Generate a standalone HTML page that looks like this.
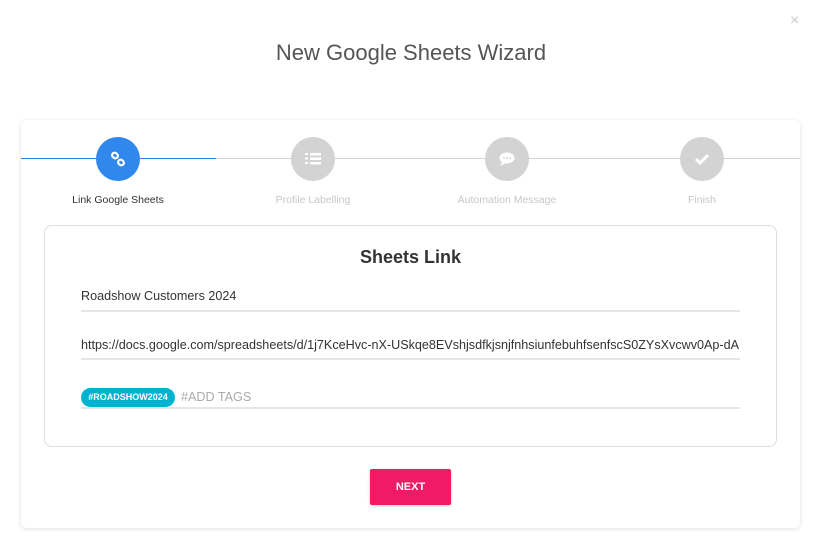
<!DOCTYPE html><html><head><style>
body{margin:0;width:814px;height:551px;background:#fff;font-family:"Liberation Sans",sans-serif;position:relative;overflow:hidden}
.a{position:absolute}
.c{position:absolute;width:44px;height:44px;border-radius:50%;background:#d3d3d3;top:137px;display:flex;align-items:center;justify-content:center}
.l{position:absolute;top:194px;font-size:10.5px;color:#c8c8c8;width:160px;text-align:center}
.u{position:absolute;left:81px;width:659px;height:2px;background:#e6e6e6}
</style></head><body>
<div class="a" style="left:790px;top:12px;color:#ccc;font-size:16px">×</div>
<div class="a" style="left:0;width:822px;top:40px;text-align:center;font-size:22px;color:#555">New Google Sheets Wizard</div>
<div class="a" style="left:21px;top:120px;width:779px;height:408px;border-radius:6px;box-shadow:0 1px 5px rgba(0,0,0,.12)"></div>
<div class="a" style="left:21px;top:158px;width:195px;height:1px;background:#2f84e8"></div>
<div class="a" style="left:216px;top:158px;width:584px;height:1px;background:#d3d3d3"></div>
<div class="c" style="left:96px;background:#3088ec"><svg width="16" height="16" viewBox="0 0 16 16" fill="none" stroke="#fff" stroke-width="2.2"><rect x="2" y="2" width="6" height="5" rx="2.5" transform="rotate(40 5 4.5)"/><rect x="8" y="9" width="6" height="5" rx="2.5" transform="rotate(40 11 11.5)"/></svg></div>
<div class="c" style="left:291px"><svg width="16" height="14" viewBox="0 0 16 14" fill="#fff"><rect x="5" y="1" width="11" height="2.5"/><rect x="5" y="5.5" width="11" height="2.5"/><rect x="5" y="10" width="11" height="2.5"/><rect x="0" y="1" width="3" height="2"/><rect x="0" y="5.5" width="3" height="2"/><rect x="0" y="10" width="3" height="2"/></svg></div>
<div class="c" style="left:485px"><svg width="16" height="14" viewBox="0 0 16 14"><ellipse cx="8" cy="6" rx="7.5" ry="5.5" fill="#fff"/><path d="M3 10 L1 14 L7 11Z" fill="#fff"/><circle cx="5" cy="6" r="0.9" fill="#ccc"/><circle cx="8" cy="6" r="0.9" fill="#ccc"/><circle cx="11" cy="6" r="0.9" fill="#ccc"/></svg></div>
<div class="c" style="left:680px"><svg width="16" height="14" viewBox="0 0 16 14"><path d="M2 7 L6 11 L14 3" fill="none" stroke="#fff" stroke-width="3"/></svg></div>
<div class="l" style="left:38px;color:#333">Link Google Sheets</div>
<div class="l" style="left:233px">Profile Labelling</div>
<div class="l" style="left:427px">Automation Message</div>
<div class="l" style="left:622px">Finish</div>
<div class="a" style="left:44px;top:225px;width:731px;height:220px;border:1px solid #ddd;border-radius:8px"></div>
<div class="a" style="left:44px;width:733px;top:247px;text-align:center;font-size:18px;font-weight:bold;color:#333">Sheets Link</div>
<div class="a" style="left:81px;top:289px;font-size:12.6px;color:#333">Roadshow Customers 2024</div>
<div class="u" style="top:310px"></div>
<div class="a" style="left:81px;top:338px;font-size:12.6px;color:#333;width:659px;overflow:hidden;white-space:nowrap">https://docs.google.com/spreadsheets/d/1j7KceHvc-nX-USkqe8EVshjsdfkjsnjfnhsiunfebuhfsenfscS0ZYsXvcwv0Ap-dA</div>
<div class="u" style="top:358px"></div>
<div class="a" style="left:81px;top:388px;height:19px;width:94px;border-radius:10px;background:#00b4d0;color:#fff;font-size:9px;font-weight:bold;line-height:19px;text-align:center">#ROADSHOW2024</div>
<div class="a" style="left:181px;top:390px;font-size:12.6px;color:#aaa">#ADD TAGS</div>
<div class="u" style="top:407px"></div>
<div class="a" style="left:370px;top:469px;width:81px;height:36px;background:#f01a65;border-radius:2px;color:#fff;font-size:11px;font-weight:bold;line-height:36px;text-align:center;box-shadow:0 1px 3px rgba(0,0,0,.2)">NEXT</div>
</body></html>
